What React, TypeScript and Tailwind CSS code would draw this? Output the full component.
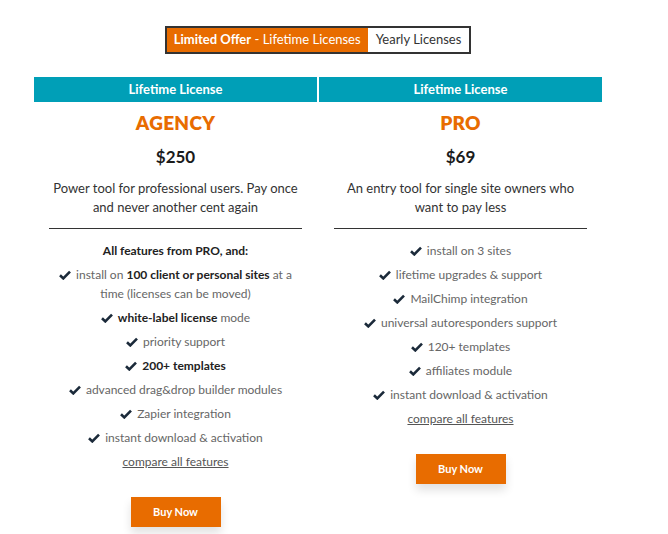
import { ReactNode } from 'react'

type Plan = {
  name: string
  price: string
  desc: string[]
  intro?: string
  features: ReactNode[]
}

const plans: Plan[] = [
  {
    name: 'AGENCY',
    price: '$250',
    desc: ['Power tool for professional users. Pay once', 'and never another cent again'],
    intro: 'All features from PRO, and:',
    features: [
      <>
        install on <b className="font-bold text-[#222]">100 client or personal sites</b> at a
        <br />
        time (licenses can be moved)
      </>,
      <>
        <b className="font-bold text-[#222]">white-label license</b> mode
      </>,
      <>priority support</>,
      <b className="font-bold text-[#222]">200+ templates</b>,
      <>advanced drag&amp;drop builder modules</>,
      <>Zapier integration</>,
      <>instant download &amp; activation</>,
    ],
  },
  {
    name: 'PRO',
    price: '$69',
    desc: ['An entry tool for single site owners who', 'want to pay less'],
    features: [
      <>install on 3 sites</>,
      <>lifetime upgrades &amp; support</>,
      <>MailChimp integration</>,
      <>universal autoresponders support</>,
      <>120+ templates</>,
      <>affiliates module</>,
      <>instant download &amp; activation</>,
    ],
  },
]

function Check() {
  return (
    <svg width="12" height="10" viewBox="0 0 12 10" className="mr-[5px] inline-block -mt-[2px] align-middle">
      <path d="M1 5.2 L4.3 8.4 L11 1.6" fill="none" stroke="#1b2a3a" strokeWidth="2.6" />
    </svg>
  )
}

function PlanCard({ plan }: { plan: Plan }) {
  return (
    <div className="flex flex-col items-center">
      <div className="w-full h-[25px] bg-[#009fb7] text-white text-[13px] font-bold flex items-center justify-center">
        Lifetime License
      </div>
      <div className="mt-[7px] text-[19px] font-extrabold text-[#e86c00] tracking-[0.3px]">{plan.name}</div>
      <div className="mt-[6px] text-[17px] font-bold text-[#1b1b1b]">{plan.price}</div>
      <div className="mt-[10px] text-[13px] leading-[19px] text-[#333] text-center">
        {plan.desc.map((d) => (
          <div key={d}>{d}</div>
        ))}
      </div>
      <div className="mt-[11px] w-[253px] border-t border-[#333]" />
      <div className="mt-[12px] flex flex-col items-center gap-[5px] text-[12px] leading-[19px] text-[#666] text-center">
        {plan.intro && <div className="font-bold text-[#222]">{plan.intro}</div>}
        {plan.features.map((f, i) => (
          <div key={i}>
            <Check />
            {f}
          </div>
        ))}
        <a href="#" className="underline text-[#555]">
          compare all features
        </a>
      </div>
      <button className="mt-[26px] w-[90px] h-[30px] bg-[#e86c00] text-white text-[11px] font-bold shadow-[0_6px_10px_rgba(0,0,0,0.12)]">
        Buy Now
      </button>
    </div>
  )
}

export default function App() {
  return (
    <div className="min-h-[534px] bg-white pt-[26px] font-['Lato',sans-serif]">
      <div className="ml-[34px] w-[568px]">
        <div className="flex justify-center">
          <div className="flex border-2 border-[#333] h-[28px] text-[13px]">
            <div className="bg-[#e86c00] text-white flex items-center px-[7px]">
              <b className="font-bold">Limited Offer</b>&nbsp;- Lifetime Licenses
            </div>
            <div className="bg-white text-[#333] flex items-center px-[8px]">Yearly Licenses</div>
          </div>
        </div>
        <div className="mt-[23px] grid grid-cols-2 gap-[2px]">
          {plans.map((p) => (
            <PlanCard key={p.name} plan={p} />
          ))}
        </div>
      </div>
    </div>
  )
}
